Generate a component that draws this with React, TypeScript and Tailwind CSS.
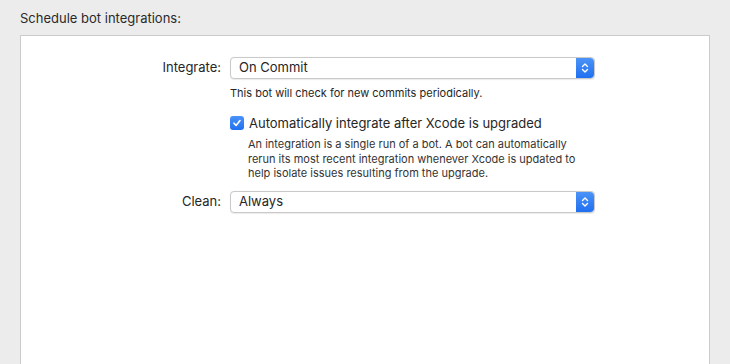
import React from "react";

function Stepper() {
  return (
    <div className="flex h-full w-[18px] items-center justify-center rounded-r-[4px] bg-gradient-to-b from-[#4b93f7] to-[#1f6ff0]">
      <svg width="8" height="12" viewBox="0 0 8 12" fill="none">
        <path d="M1.5 4.5 L4 2 L6.5 4.5" stroke="white" strokeWidth="1.4" strokeLinecap="round" strokeLinejoin="round" />
        <path d="M1.5 7.5 L4 10 L6.5 7.5" stroke="white" strokeWidth="1.4" strokeLinecap="round" strokeLinejoin="round" />
      </svg>
    </div>
  );
}

function Select({ value }: { value: string }) {
  return (
    <div className="flex h-[22px] w-[365px] items-stretch rounded-[4px] border border-[#c9c9c9] bg-white shadow-[0_0.5px_1px_rgba(0,0,0,0.08)]">
      <div className="flex flex-1 items-center pl-[8px] text-[13px] text-[#262626]">{value}</div>
      <Stepper />
    </div>
  );
}

export default function App() {
  return (
    <div
      className="h-[364px] w-[730px] overflow-hidden bg-[#ececec] pl-[20px] pr-[20px]"
      style={{ fontFamily: "Inter, 'Helvetica Neue', Arial, sans-serif" }}
    >
      <div className="pt-[10px] text-[13px] leading-[16px] text-[#2a2a2a]">Schedule bot integrations:</div>
      <div className="mt-[9px] h-[400px] w-[690px] border border-[#cbcbcb] bg-white">
        <div className="flex flex-col pt-[21px]">
          <div className="flex items-center">
            <div className="w-[200px] text-right text-[13px] text-[#262626]">Integrate:</div>
            <div className="ml-[9px]">
              <Select value="On Commit" />
            </div>
          </div>
          <div className="ml-[209px] mt-[7px] text-[11px] leading-[14px] text-[#262626]">
            This bot will check for new commits periodically.
          </div>
          <div className="ml-[209px] mt-[15px] flex items-center">
            <div className="flex h-[14px] w-[14px] items-center justify-center rounded-[3px] bg-gradient-to-b from-[#4b93f7] to-[#1f6ff0]">
              <svg width="10" height="10" viewBox="0 0 10 10" fill="none">
                <path d="M2 5.2 L4.1 7.4 L8 2.6" stroke="white" strokeWidth="1.6" strokeLinecap="round" strokeLinejoin="round" />
              </svg>
            </div>
            <div className="ml-[5px] text-[13px] leading-[16px] text-[#262626]">
              Automatically integrate after Xcode is upgraded
            </div>
          </div>
          <div className="ml-[227px] mt-[6px] w-[336px] text-[11px] leading-[14.5px] text-[#333333]">
            An integration is a single run of a bot. A bot can automatically rerun its most recent integration whenever Xcode is updated to help isolate issues resulting from the upgrade.
          </div>
          <div className="mt-[10px] flex items-center">
            <div className="w-[200px] text-right text-[13px] text-[#262626]">Clean:</div>
            <div className="ml-[9px]">
              <Select value="Always" />
            </div>
          </div>
        </div>
      </div>
    </div>
  );
}
